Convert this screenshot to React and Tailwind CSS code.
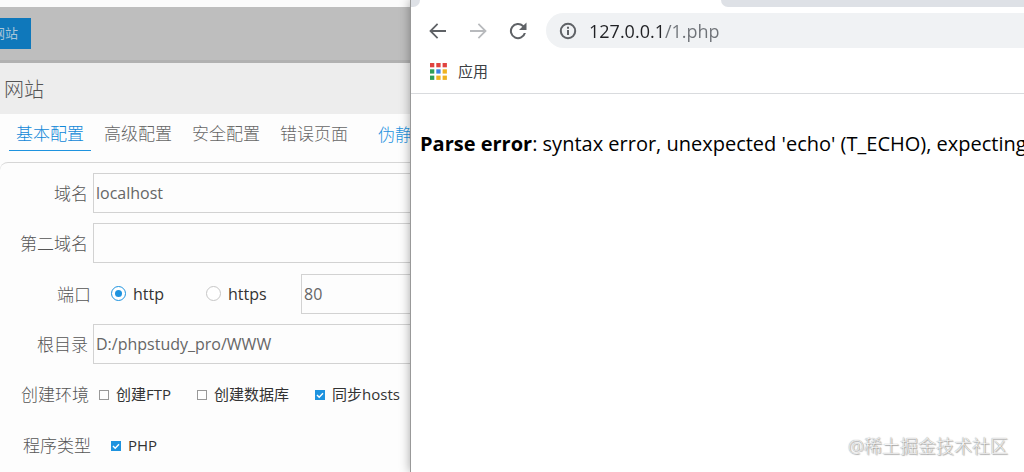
import React, { useState } from "react";

const TABS = ["基本配置", "高级配置", "安全配置", "错误页面"];

const TextField = ({ id, label, defaultValue = "" }) => (
  <div className="flex h-10 items-center gap-[5px]">
    <label
      htmlFor={id}
      className="w-[88px] shrink-0 pt-[2px] text-right text-[17px] font-light"
    >
      {label}
    </label>
    <input
      id={id}
      type="text"
      defaultValue={defaultValue}
      className="h-10 min-w-0 flex-1 border border-r-0 border-[#d2d2d2] bg-[#fdfdfd] px-[2px] text-base text-[#666] outline-none"
    />
  </div>
);

const Radio = ({ value, checked, onChange }) => (
  <label className="flex w-[95px] items-center gap-[7px] text-base text-[#333]">
    <span className="grid shrink-0 place-items-center">
      <input
        type="radio"
        name="protocol"
        value={value}
        checked={checked}
        onChange={() => onChange(value)}
        className="peer col-start-1 row-start-1 h-[15px] w-[15px] appearance-none rounded-full border border-[#c6c6c6] bg-white checked:border-[#1e93df]"
      />
      <span className="pointer-events-none col-start-1 row-start-1 hidden h-[7px] w-[7px] rounded-full bg-[#1e93df] peer-checked:block" />
    </span>
    {value}
  </label>
);

const Checkbox = ({ label, defaultChecked = false }) => (
  <label className="flex items-center gap-[7px] text-[15px] text-[#333]">
    <span className="grid shrink-0 place-items-center">
      <input
        type="checkbox"
        defaultChecked={defaultChecked}
        className="peer col-start-1 row-start-1 h-[10px] w-[10px] appearance-none border border-[#999] bg-white checked:border-[#1e93df] checked:bg-[#1e93df]"
      />
      <svg
        viewBox="0 0 10 10"
        className="pointer-events-none col-start-1 row-start-1 hidden h-[10px] w-[10px] peer-checked:block"
        fill="none"
        stroke="#fff"
        strokeWidth="1.4"
      >
        <path d="M2 5l2.2 2.2L8 3.2" />
      </svg>
    </span>
    {label}
  </label>
);

const SitePanel = () => {
  const [tab, setTab] = useState("基本配置");
  const [protocol, setProtocol] = useState("http");

  return (
    <section className="flex w-[410px] shrink-0 flex-col overflow-hidden bg-[#fdfdfd] text-[#555]">
      <div className="h-[7px] bg-[#fbfbfb]" />
      <div className="flex h-14 items-center border-b-[3px] border-[#b1b1b1] bg-[#bebebe]">
        <button className="-ml-5 h-[31px] bg-[#0f78bb] pr-[13px] pl-3 text-[13px] text-[#a9c6d8]">
          网站
        </button>
      </div>
      <h1 className="flex h-[51px] items-center bg-[#ededed] pt-[2px] pl-1 text-xl font-light">
        网站
      </h1>

      <nav className="flex gap-[6px] pl-[9px] text-[17px] font-light whitespace-nowrap">
        {TABS.map((name) => (
          <button
            key={name}
            onClick={() => setTab(name)}
            className={`h-[37px] border-b px-[7px] pt-1 ${
              tab === name
                ? "border-[#1e93df] text-[#0f87d8]"
                : "border-transparent text-[#666]"
            }`}
          >
            {name}
          </button>
        ))}
        <button className="ml-[10px] h-[37px] shrink-0 px-[7px] pt-1 text-[#1e93df]">
          伪静态
        </button>
      </nav>

      <form className="mt-[11px] flex flex-1 flex-col gap-[10px] rounded-tl-lg border-t border-[#d6d6d6] pt-[10px]">
        <TextField id="domain" label="域名" defaultValue="localhost" />
        <TextField id="domain2" label="第二域名" />
        <div className="flex h-[41px] items-center">
          <label
            htmlFor="port"
            className="mr-5 w-[91px] shrink-0 pt-[2px] text-right text-[17px] font-light"
          >
            端口
          </label>
          <Radio
            value="http"
            checked={protocol === "http"}
            onChange={setProtocol}
          />
          <Radio
            value="https"
            checked={protocol === "https"}
            onChange={setProtocol}
          />
          <input
            id="port"
            type="text"
            defaultValue="80"
            className="h-10 min-w-0 flex-1 border border-r-0 border-[#d2d2d2] bg-[#fdfdfd] px-[2px] text-base text-[#666] outline-none"
          />
        </div>
        <TextField id="root" label="根目录" defaultValue="D:/phpstudy_pro/WWW" />
        <div className="flex h-[41px] items-center whitespace-nowrap">
          <span className="mr-[10px] w-[89px] shrink-0 text-right text-[17px] font-light">
            创建环境
          </span>
          <div className="flex gap-[26px]">
            <Checkbox label="创建FTP" />
            <Checkbox label="创建数据库" />
            <Checkbox label="同步hosts" defaultChecked />
          </div>
        </div>
        <div className="flex h-[41px] items-center whitespace-nowrap">
          <span className="mr-5 w-[91px] shrink-0 text-right text-[17px] font-light">
            程序类型
          </span>
          <Checkbox label="PHP" defaultChecked />
        </div>
      </form>
    </section>
  );
};

const NavIcon = ({ d }) => (
  <svg viewBox="0 0 24 24" className="block h-6 w-6" fill="currentColor">
    <path d={d} />
  </svg>
);

const APP_COLORS = [
  "#e0433f", "#e0433f", "#e0433f",
  "#2f9e58", "#3b82e6", "#efb320",
  "#2f9e58", "#efb320", "#efb320",
];

const AppsIcon = () => (
  <svg viewBox="0 0 17 17" className="h-[17px] w-[17px]">
    {APP_COLORS.map((color, i) => (
      <rect
        key={i}
        x={(i % 3) * 6.3}
        y={Math.floor(i / 3) * 6.3}
        width="4.3"
        height="4.3"
        fill={color}
      />
    ))}
  </svg>
);

const BrowserWindow = () => (
  <section className="z-10 flex min-w-0 flex-1 flex-col overflow-hidden border-l border-[#999] bg-white shadow-[0_0_10px_rgba(0,0,0,0.35)]">
    <div className="flex h-[7px]">
      <div className="w-[9px] rounded-br-lg bg-[#dee1e6]" />
      <div className="w-[301px]" />
      <div className="flex-1 rounded-bl-lg bg-[#dee1e6]" />
    </div>
    <div className="flex h-[47px] items-center pl-[15px] text-[#5f6266]">
      <button aria-label="Back">
        <NavIcon d="M20 11H6.8l5.4-5.4L11 4.2 3.2 12l7.8 7.800 1.200-1.400L6.800 13H20z" />
      </button>
      <button aria-label="Forward" className="ml-4 text-[#b8babd]">
        <NavIcon d="M4 11h13.200l-5.400-5.400L13 4.200l7.800 7.800-7.800 7.800-1.200-1.400 5.400-5.400H4z" />
      </button>
      <button aria-label="Reload" className="ml-4">
        <NavIcon d="M17.700 6.300A8.100 8.100 0 1 0 19.900 14h-2.100a6.100 6.100 0 1 1-1.500-6.300L13 11h7.500V3.500z" />
      </button>
      <div className="ml-4 flex h-[35px] min-w-0 flex-1 items-center gap-3 rounded-l-full bg-[#f0f2f4] pl-[13px]">
        <svg
          viewBox="0 0 18 18"
          className="h-[18px] w-[18px] shrink-0"
          fill="none"
          stroke="currentColor"
          strokeWidth="2"
        >
          <circle cx="9" cy="9" r="7.2" />
          <path d="M9 8v5M9 4.800v2" />
        </svg>
        <input
          type="text"
          aria-label="Address"
          defaultValue="127.0.0.1/1.php"
          className="min-w-0 flex-1 bg-[linear-gradient(to_right,#202124_74px,#6f7378_74px)] bg-clip-text text-lg text-transparent caret-black outline-none"
        />
      </div>
    </div>
    <div className="flex h-10 items-center border-b border-[#d9dbde] pb-[5px] pl-[19px]">
      <a
        href="#apps"
        className="flex items-center gap-[11px] text-[15px] text-[#3c4043]"
      >
        <AppsIcon />
        应用
      </a>
    </div>
    <p className="mt-[34px] ml-[9px] text-xl leading-8 whitespace-nowrap text-black">
      <b>Parse error</b>: syntax error, unexpected 'echo' (T_ECHO), expecting
    </p>
  </section>
);

export default function App() {
  return (
    <main className="relative flex min-h-screen overflow-hidden font-['Open_Sans','Noto_Sans_CJK_SC',sans-serif]">
      <SitePanel />
      <BrowserWindow />
      <span className="absolute right-4 bottom-3 z-20 text-lg font-light text-[#f4f4f4] [text-shadow:0_0_1px_#777,1px_1px_1px_#aaa]">
        @稀土掘金技术社区
      </span>
    </main>
  );
}
